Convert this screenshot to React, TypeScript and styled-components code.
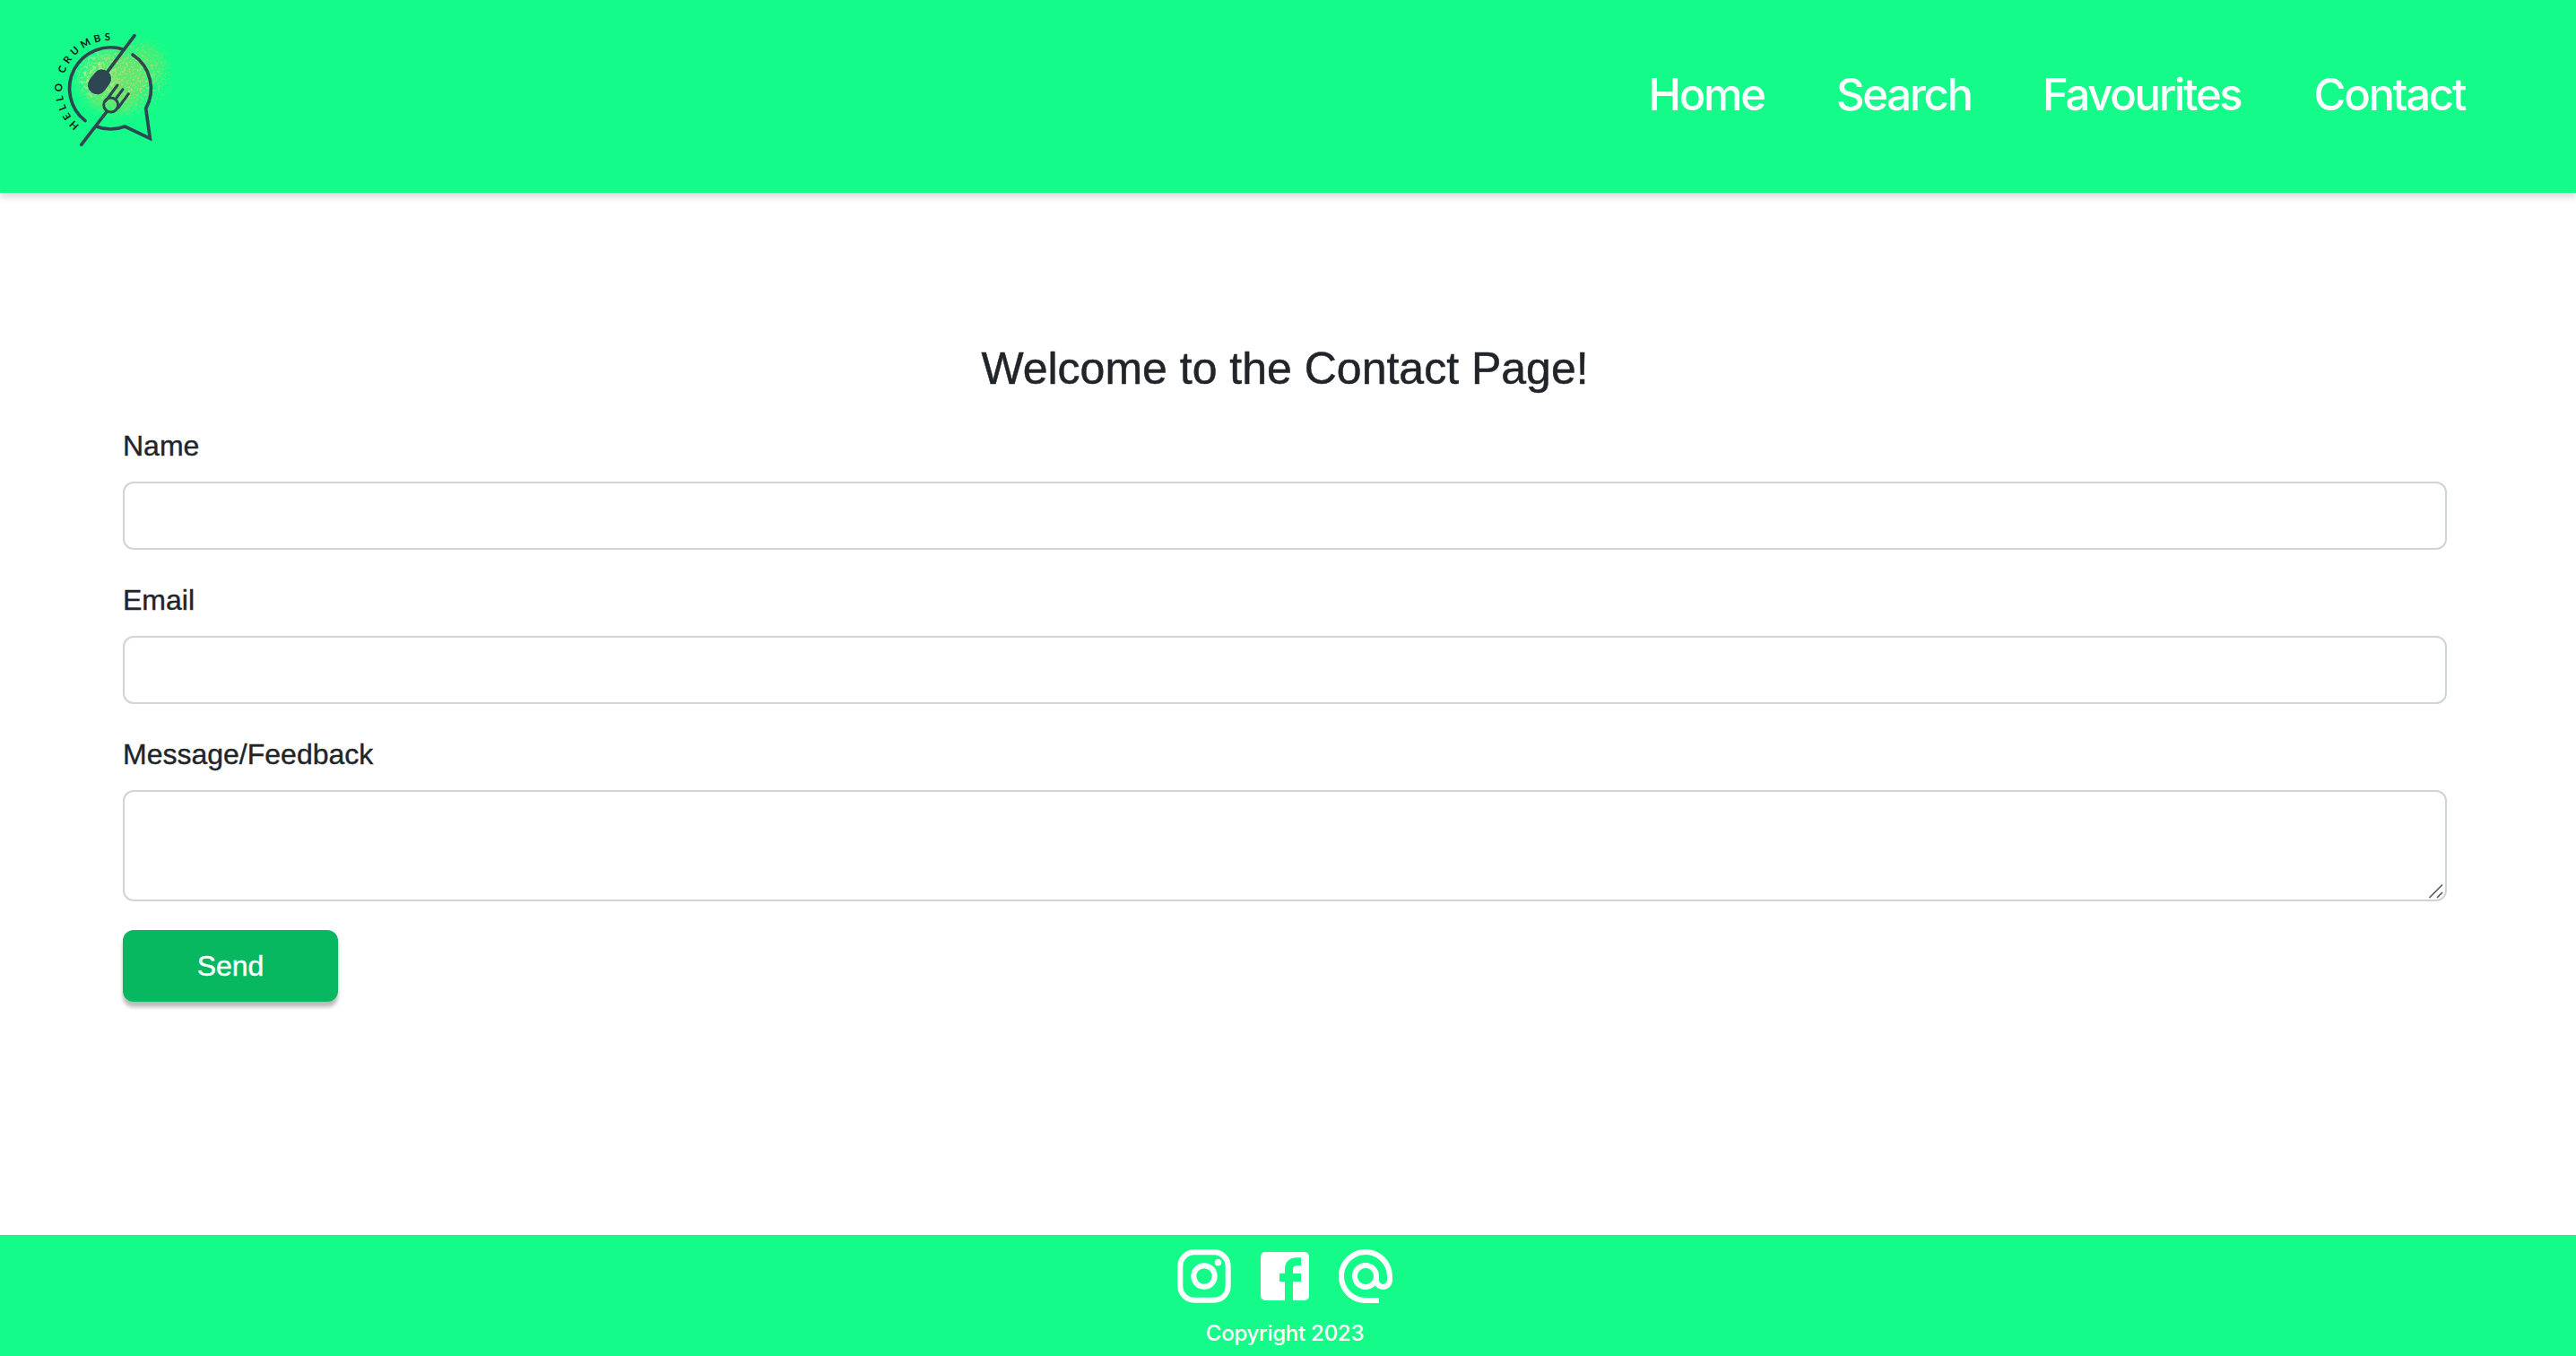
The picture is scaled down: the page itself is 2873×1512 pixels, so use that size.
import React from "react";
import styled, { createGlobalStyle } from "styled-components";
import { MdAlternateEmail } from "react-icons/md";

const GREEN = "#14fb8a";
const SLATE = "#2e4552";

const GlobalStyle = createGlobalStyle`
  *, *::before, *::after { box-sizing: border-box; }
  body {
    margin: 0;
    background: #fff;
    color: #212529;
    font-family: "Liberation Sans", Arial, sans-serif;
  }
`;

const Page = styled.div`
  display: flex;
  flex-direction: column;
  min-height: 1512px;
`;

const Header = styled.header`
  display: flex;
  align-items: flex-start;
  justify-content: space-between;
  height: 215px;
  padding: 10px 120px 0 30px;
  background: ${GREEN};
  box-shadow: 0 6px 6px rgba(0, 0, 0, 0.12);
`;

const LogoMark = styled.svg`
  width: 190px;
  height: 180px;
  flex: none;
`;

const LogoText = styled.text`
  font-family: Lato, "Liberation Sans", sans-serif;
  font-size: 34px;
  font-weight: 700;
  fill: #0b1d17;
`;

const Nav = styled.nav`
  display: flex;
  margin-top: 66px;
  gap: 80px;
`;

const NavLink = styled.a<{ $width: number }>`
  width: ${(p) => p.$width}px;
  color: #fff;
  font-family: Inter, sans-serif;
  font-size: 49px;
  font-weight: 500;
  line-height: 60px;
  letter-spacing: -2.3px;
  white-space: nowrap;
  text-decoration: none;
`;

const Main = styled.main`
  flex: 1;
  padding: 166px 144px 0 137px;
`;

const Title = styled.h1`
  margin: 0;
  font-size: 50px;
  font-weight: 400;
  line-height: 60px;
  text-align: center;
  -webkit-text-stroke: 0.5px currentColor;
`;

const Form = styled.form`
  display: flex;
  flex-direction: column;
  align-items: flex-start;
  padding-top: 32px;
`;

const Field = styled.label`
  display: flex;
  flex-direction: column;
  width: 100%;
  gap: 16px;
  margin-bottom: 32px;
`;

const FieldName = styled.span`
  font-size: 32px;
  line-height: 48px;
  -webkit-text-stroke: 0.4px currentColor;
`;

const Input = styled.input`
  width: 100%;
  height: 76px;
  padding: 12px 24px;
  border: 2px solid #ced4da;
  border-radius: 12px;
  background: #fff;
  font: inherit;
  font-size: 32px;
`;

const AreaFrame = styled.span`
  position: relative;
  display: block;
  height: 124px;
`;

const Area = styled.textarea`
  display: block;
  width: 100%;
  height: 124px;
  padding: 12px 24px;
  border: 2px solid #ced4da;
  border-radius: 12px;
  background: #fff;
  font: inherit;
  font-size: 32px;
  resize: none;
`;

const Grip = styled.svg`
  position: absolute;
  right: 3px;
  bottom: 2px;
  width: 18px;
  height: 18px;
`;

const SendButton = styled.button`
  width: 240px;
  height: 80px;
  padding: 0;
  border: 0;
  border-radius: 12px;
  background: #08b861;
  box-shadow: 0 6px 4px rgba(0, 0, 0, 0.27);
  color: #fff;
  font-family: "Liberation Sans", Arial, sans-serif;
  font-size: 32px;
  line-height: 48px;
  -webkit-text-stroke: 0.4px currentColor;
`;

const Footer = styled.footer`
  display: flex;
  flex-direction: column;
  align-items: center;
  height: 135px;
  padding: 10px 7px 0 0;
  background: ${GREEN};
  color: #fff;
`;

const Socials = styled.div`
  display: flex;
  gap: 18px;
  svg { display: block; width: 72px; height: 72px; }
`;

const Copyright = styled.p`
  margin: 13px 0 0;
  font-family: Inter, sans-serif;
  font-size: 24px;
  font-weight: 500;
  line-height: 30px;
  letter-spacing: -0.25px;
`;

const links = [
  { label: "Home", width: 129.4 },
  { label: "Search", width: 150 },
  { label: "Favourites", width: 222.5 },
  { label: "Contact", width: 172.5 },
];

function Logo() {
  return (
    <LogoMark viewBox="0 0 570 540" role="img" aria-label="Hello Crumbs">
      <defs>
        <path id="ring" d="M175.5 389.3 A161 161 0 0 1 334 114.7" />
        <radialGradient id="core">
          <stop offset="0" stopColor="#72e168" stopOpacity="0.95" />
          <stop offset="0.65" stopColor="#62e86c" stopOpacity="0.8" />
          <stop offset="1" stopColor="#3cf47c" stopOpacity="0" />
        </radialGradient>
        <radialGradient id="fade">
          <stop offset="0.45" stopColor="#fff" />
          <stop offset="1" stopColor="#000" />
        </radialGradient>
        <filter id="rough" x="-20%" y="-20%" width="140%" height="140%">
          <feTurbulence type="fractalNoise" baseFrequency="0.09" numOctaves="3" seed="4" />
          <feDisplacementMap in="SourceGraphic" scale="60" xChannelSelector="R" yChannelSelector="G" />
        </filter>
        <filter id="dust" x="0" y="0" width="100%" height="100%">
          <feTurbulence type="fractalNoise" baseFrequency="0.13" numOctaves="3" seed="9" />
          <feColorMatrix values="0 0 0 0 0.58  0 0 0 0 0.68  0 0 0 0 0.24  9 0 0 0 -4.9" />
        </filter>
        <filter id="pollen" x="0" y="0" width="100%" height="100%">
          <feTurbulence type="fractalNoise" baseFrequency="0.1" numOctaves="3" seed="21" />
          <feColorMatrix values="0 0 0 0 0.6  0 0 0 0 0.9  0 0 0 0 0.38  7 0 0 0 -3.4" />
        </filter>
        <mask id="cloud">
          <ellipse cx="335" cy="230" rx="165" ry="140" fill="url(#fade)" />
        </mask>
        <mask id="leftCloud">
          <ellipse cx="235" cy="225" rx="90" ry="100" fill="url(#fade)" />
        </mask>
      </defs>
      <g filter="url(#rough)">
        <ellipse cx="295" cy="245" rx="135" ry="130" fill="url(#core)" />
        <ellipse cx="395" cy="190" rx="85" ry="95" fill="url(#core)" opacity="0.6" />
      </g>
      <g mask="url(#leftCloud)">
        <rect x="140" y="110" width="200" height="230" filter="url(#pollen)" opacity="0.6" />
      </g>
      <g mask="url(#cloud)">
        <rect x="150" y="70" width="350" height="310" filter="url(#dust)" opacity="0.7" />
      </g>
      <g fill="none" stroke={SLATE} strokeWidth="11" strokeLinecap="round">
        <path d="M195 374 A137.5 137.5 0 0 1 322 135" />
        <path d="M354 153 A136 136 0 0 1 398 333 L412 433 L328 393 A136 136 0 0 1 232 393" />
        <path d="M360 89 L262 220" />
        <path d="M182 454 L266 345" />
        <circle cx="281" cy="321" r="24" strokeWidth="9" />
        <path d="M303 255 L264 307 M321 269 L300 297 M340 284 L306 330" strokeWidth="9" />
      </g>
      <rect x="212" y="200" width="62" height="88" rx="30" fill={SLATE} transform="rotate(37 243 244)" />
      <LogoText>
        <textPath href="#ring" textLength="394" lengthAdjust="spacing">HELLO CRUMBS</textPath>
      </LogoText>
    </LogoMark>
  );
}

function InstagramIcon() {
  return (
    <svg viewBox="0 0 24 24" fill="none" stroke="currentColor" strokeWidth="2">
      <rect x="3.1" y="3.1" width="17.8" height="17.8" rx="5.2" />
      <circle cx="12" cy="12" r="3.9" />
      <circle cx="17.15" cy="6.9" r="1.25" fill="currentColor" stroke="none" />
    </svg>
  );
}

function FacebookIcon() {
  return (
    <svg viewBox="0 0 24 24" fill="currentColor">
      <path d="M4.7 3h14.6A1.7 1.7 0 0 1 21 4.7v14.6a1.7 1.7 0 0 1-1.7 1.7H15v-7h3v-3h-3v-1.5A1.5 1.5 0 0 1 16.5 8H18V5.1h-2a4 4 0 0 0-4 4V11h-2v3h2v7H4.7A1.7 1.7 0 0 1 3 19.3V4.7A1.7 1.7 0 0 1 4.7 3z" />
    </svg>
  );
}

export default function App() {
  return (
    <Page>
      <GlobalStyle />
      <Header>
        <Logo />
        <Nav>
          {links.map((l) => (
            <NavLink key={l.label} $width={l.width}>{l.label}</NavLink>
          ))}
        </Nav>
      </Header>
      <Main>
        <Title>Welcome to the Contact Page!</Title>
        <Form>
          <Field>
            <FieldName>Name</FieldName>
            <Input />
          </Field>
          <Field>
            <FieldName>Email</FieldName>
            <Input />
          </Field>
          <Field>
            <FieldName>Message/Feedback</FieldName>
            <AreaFrame>
              <Area />
              <Grip viewBox="0 0 18 18" fill="none" stroke="#555" strokeWidth="1.6">
                <path d="M1.5 16 L16 1.5 M10 16 L16 10" />
              </Grip>
            </AreaFrame>
          </Field>
          <SendButton type="button">Send</SendButton>
        </Form>
      </Main>
      <Footer>
        <Socials>
          <InstagramIcon />
          <FacebookIcon />
          <MdAlternateEmail />
        </Socials>
        <Copyright>Copyright 2023</Copyright>
      </Footer>
    </Page>
  );
}
